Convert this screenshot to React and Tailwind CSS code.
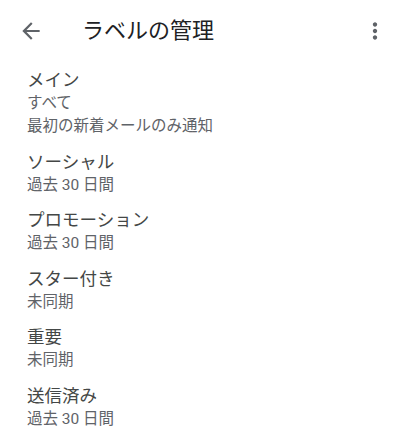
import React from 'react'

const labels = [
  { name: 'メイン', lines: ['すべて', '最初の新着メールのみ通知'] },
  { name: 'ソーシャル', lines: ['過去 30 日間'] },
  { name: 'プロモーション', lines: ['過去 30 日間'] },
  { name: 'スター付き', lines: ['未同期'] },
  { name: '重要', lines: ['未同期'] },
  { name: '送信済み', lines: ['過去 30 日間'] },
]

export default function App() {
  return (
    <div className="w-[400px] h-[437px] bg-white overflow-hidden" style={{ fontFamily: "Roboto, 'Noto Sans CJK JP', sans-serif" }}>
      <header className="h-[62px] flex items-center">
        <button className="ml-[18px] w-[26px] h-[26px] text-[#5f6368]" aria-label="戻る">
          <svg viewBox="0 0 24 24" width="26" height="26" fill="currentColor">
            <path d="M20 11H7.83l5.59-5.59L12 4l-8 8 8 8 1.41-1.41L7.83 13H20v-2z" />
          </svg>
        </button>
        <h1 className="ml-[38px] text-[22px] leading-[28px] text-[#202124] flex-1">ラベルの管理</h1>
        <button className="mr-[12px] w-[26px] h-[26px] text-[#5f6368]" aria-label="その他">
          <svg viewBox="0 0 24 24" width="26" height="26" fill="currentColor">
            <path d="M12 8c1.1 0 2-.9 2-2s-.9-2-2-2-2 .9-2 2 .9 2 2 2zm0 2c-1.1 0-2 .9-2 2s.9 2 2 2 2-.9 2-2-.9-2-2-2zm0 6c-1.1 0-2 .9-2 2s.9 2 2 2 2-.9 2-2-.9-2-2-2z" />
          </svg>
        </button>
      </header>

      <div className="pt-[6px] px-[27px] flex flex-col gap-[11.5px]">
        {labels.map((l) => (
          <div key={l.name}>
            <div className="text-[17.5px] leading-[24px] text-[#444746]">{l.name}</div>
            {l.lines.map((s) => (
              <div key={s} className="text-[15.5px] leading-[23px] text-[#5f6368]">{s}</div>
            ))}
          </div>
        ))}
      </div>
    </div>
  )
}
